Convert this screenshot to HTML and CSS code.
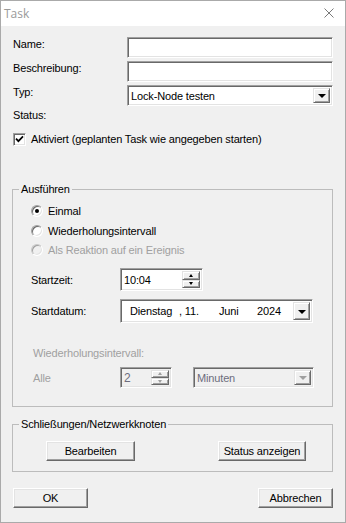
FILE: index.html
```html
<!DOCTYPE html>
<html lang="de">
<head>
<meta charset="utf-8">
<title>Task</title>
<link rel="stylesheet" href="styles.css">
</head>
<body>
<div class="window">
  <div class="titlebar">
    <span class="title">Task</span>
    <svg class="close" width="10" height="10" viewBox="0 0 10 10"><path d="M0.5 0.5 L9.5 9.5 M9.5 0.5 L0.5 9.5" stroke="#7a7a7a" stroke-width="1" fill="none"/></svg>
  </div>
  <div class="content">
    <div class="row"><span class="lbl">Name:</span><div class="field sunken"></div></div>
    <div class="row"><span class="lbl">Beschreibung:</span><div class="field sunken"></div></div>
    <div class="row"><span class="lbl">Typ:</span>
      <div class="field sunken combo"><span class="val">Lock-Node testen</span><span class="dropbtn raised"><i class="tri"></i></span></div>
    </div>
    <div class="status">Status:</div>
    <div class="check"><span class="cbox sunken"><svg width="9" height="9" viewBox="0 0 9 9"><path d="M1 3.6 L3.4 6.2 L8 1.4" stroke="#000" stroke-width="1.7" fill="none"/></svg></span><span class="ctext">Aktiviert (geplanten Task wie angegeben starten)</span></div>

    <fieldset class="group g1">
      <legend>Ausführen</legend>
      <div class="g1body">
        <div class="radios">
          <div class="radio r1"><span class="rbtn"><i class="dot"></i></span><span>Einmal</span></div>
          <div class="radio r2"><span class="rbtn"></span><span>Wiederholungsintervall</span></div>
          <div class="radio r3 disabled"><span class="rbtn"></span><span>Als Reaktion auf ein Ereignis</span></div>
        </div>
        <div class="frow time"><span class="flbl">Startzeit:</span>
          <div class="spin sunken"><span class="val">10:04</span><span class="spinbtns"><span class="sb raised"><i class="up"></i></span><span class="sb raised"><i class="dn"></i></span></span></div>
        </div>
        <div class="frow date"><span class="flbl">Startdatum:</span>
          <div class="datebox sunken"><span class="d1">Dienstag</span><span class="d2">, 11.</span><span class="d3">Juni</span><span class="d4">2024</span><span class="dropbtn raised"><i class="tri"></i></span></div>
        </div>
        <div class="dislabel">Wiederholungsintervall:</div>
        <div class="frow alle"><span class="flbl dis">Alle</span>
          <div class="spin small sunken disabled"><span class="val">2</span><span class="spinbtns"><span class="sb raised"><i class="up"></i></span><span class="sb raised"><i class="dn"></i></span></span></div>
          <div class="mincombo sunken disabled"><span class="val">Minuten</span><span class="dropbtn raised"><i class="tri"></i></span></div>
        </div>
      </div>
    </fieldset>

    <fieldset class="group g2">
      <legend>Schließungen/Netzwerkknoten</legend>
      <div class="gbtns">
        <button class="btn b-edit">Bearbeiten</button>
        <button class="btn b-status">Status anzeigen</button>
      </div>
    </fieldset>

    <div class="footer">
      <button class="btn b-foot">OK</button>
      <button class="btn b-foot">Abbrechen</button>
    </div>
  </div>
</div>
</body>
</html>
```

FILE: styles.css
```css
* { box-sizing: border-box; margin: 0; padding: 0; }
html, body { width: 346px; height: 523px; overflow: hidden; }
body {
  margin: 0;
  font: 11px "Liberation Sans", Arial, sans-serif;
  letter-spacing: -0.15px;
  color: #000;
  background: #f0f0f0;
}
.window {
  width: 346px;
  height: 523px;
  border: 1px solid #aaaaaa;
  background: #f0f0f0;
  display: flex;
  flex-direction: column;
}
.titlebar {
  height: 25px;
  background: #fff;
  display: flex;
  align-items: center;
  justify-content: space-between;
  padding: 0 11px 1px 3px;
}
.title {
  font: 12px "Open Sans", "Noto Sans", sans-serif;
  letter-spacing: 0;
  color: #9a9a9a;
}
.close { display: block; }

.content {
  padding: 11px 12px 0 11px;
  display: flex;
  flex-direction: column;
}

/* 3D borders */
.sunken {
  background: #fff;
  border: 1px solid;
  border-color: #a0a0a0 #fff #fff #a0a0a0;
  box-shadow: inset 1px 1px 0 #696969, inset -1px -1px 0 #e3e3e3;
}
.raised {
  background: #f0f0f0;
  border: 1px solid;
  border-color: #e3e3e3 #696969 #696969 #e3e3e3;
  box-shadow: inset 1px 1px 0 #fff, inset -1px -1px 0 #a0a0a0;
}

.row { display: flex; align-items: flex-start; height: 21px; }
.row + .row { margin-top: 3px; }
.lbl { width: 115px; line-height: 14px; padding-left: 1px; }
.field { flex: 1; height: 21px; }
.combo {
  display: flex;
  align-items: center;
  justify-content: space-between;
  padding: 2px 2px 2px 3px;
}
.combo .val { line-height: 14px; }
.dropbtn {
  width: 17px;
  height: 100%;
  display: flex;
  align-items: center;
  justify-content: center;
}
.tri {
  width: 0; height: 0;
  border-left: 4px solid transparent;
  border-right: 4px solid transparent;
  border-top: 4px solid #000;
  margin-top: 1px;
}

.status { margin-top: 2px; line-height: 14px; padding-left: 1px; }
.check {
  margin-top: 10px;
  height: 14px;
  display: flex;
  align-items: center;
  padding-left: 1px;
}
.cbox {
  width: 13px; height: 13px;
  display: flex; align-items: center; justify-content: center;
  margin-right: 5px;
}
.cbox svg { display: block; }

.group {
  border: 1px solid #bcbcbc;
  margin: 0;
  padding: 0;
  min-width: 0;
}
.group legend {
  margin-left: 6px;
  padding: 0 2px;
  line-height: 14px;
}
.g1 { margin-top: 36px; }
.g1body { padding: 0 0 18px 18px; }
.radios { padding-top: 5px; display: flex; flex-direction: column; }
.radio { display: flex; align-items: center; height: 20px; }
.radio.r2 { height: 19px; }
.rbtn {
  width: 12px; height: 12px;
  border-radius: 50%;
  background: #fff;
  border: 1px solid;
  border-color: #a0a0a0 #fff #fff #a0a0a0;
  box-shadow: inset 1px 1px 0 #696969, inset -1px -1px 0 #e3e3e3;
  margin-right: 5px;
  display: flex; align-items: center; justify-content: center;
}
.dot { width: 4px; height: 4px; border-radius: 50%; background: #000; }
.radio.disabled { color: #a0a0a0; }
.radio.disabled .rbtn {
  background: #f0f0f0;
  border-color: #c8c8c8 #fff #fff #c8c8c8;
  box-shadow: inset 1px 1px 0 #a0a0a0, inset -1px -1px 0 #e3e3e3;
}

.frow { display: flex; align-items: center; margin-top: 8px; }
.flbl { width: 89px; }
.flbl.dis { color: #a0a0a0; padding-left: 2px; }
.time { height: 23px; }
.date { height: 24px; }
.spin {
  width: 83px; height: 23px;
  display: flex; align-items: center; justify-content: space-between;
  padding: 2px 2px 2px 3px;
}
.spinbtns { width: 18px; height: 100%; display: flex; flex-direction: column; }
.sb { flex: 1; display: flex; align-items: center; justify-content: center; }
.up, .dn { width: 0; height: 0; border-left: 2.5px solid transparent; border-right: 2.5px solid transparent; }
.up { border-bottom: 3px solid #000; }
.dn { border-top: 3px solid #000; }

.datebox {
  width: 193px; height: 24px;
  display: flex; align-items: center;
  padding: 2px 2px 2px 9px;
}
.d1 { width: 49px; }
.d2 { width: 40px; }
.d3 { width: 38px; }
.d4 { flex: 1; }

.dislabel { margin-top: 23px; line-height: 14px; color: #a0a0a0; padding-left: 2px; }
.alle { margin-top: 7px; height: 21px; }
.spin.small { width: 52px; height: 21px; font-size: 12px; }
.disabled.sunken { background: #f0f0f0; }
.spin.disabled .val, .mincombo .val { color: #6d6d7d; }
.spin.disabled .up { border-bottom-color: #a0a0a0; }
.spin.disabled .dn { border-top-color: #a0a0a0; }
.mincombo {
  width: 121px; height: 21px; margin-left: 21px;
  display: flex; align-items: center; justify-content: space-between;
  padding: 2px 2px 2px 3px;
}
.mincombo .tri { border-top-color: #a0a0a0; }

.g2 { margin-top: 10px; }
.gbtns { padding: 10px 26px 10px 33px; display: flex; justify-content: space-between; }

.btn {
  font: 11px "Liberation Sans", Arial, sans-serif;
  letter-spacing: -0.15px;
  color: #000;
  height: 20px;
  background: #f0f0f0;
  border: 1px solid;
  border-color: #fff #696969 #696969 #fff;
  box-shadow: inset -1px -1px 0 #a0a0a0, inset 1px 1px 0 #e3e3e3;
  display: flex; align-items: center; justify-content: center;
}
.b-edit { width: 89px; }
.b-status { width: 88px; }

.footer {
  margin-top: 16px;
  padding-left: 1px;
  display: flex;
  justify-content: space-between;
}
.b-foot { width: 75px; }
```
